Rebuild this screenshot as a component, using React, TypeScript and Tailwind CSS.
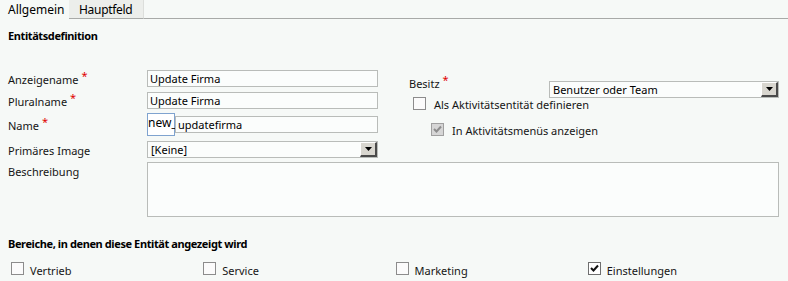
import React from "react"

function Req() {
  return <span className="ml-[3px] relative -top-[4px] text-[#e00000]">*</span>
}

function Box({ checked = false, disabled = false }: { checked?: boolean; disabled?: boolean }) {
  return (
    <span
      className={
        "inline-flex items-center justify-center w-[13px] h-[13px] border shrink-0 " +
        (disabled ? "border-[#a0a0a0] bg-[#d6d6d6]" : checked ? "border-[#6f6f6f] bg-white" : "border-[#8c8c8c] bg-[#fbfbfb]")
      }
    >
      {checked && (
        <svg width="9" height="9" viewBox="0 0 9 9">
          <path d="M1 4 L3.5 6.5 L8 1.5" fill="none" stroke={disabled ? "#8d8d8d" : "#111"} strokeWidth="2" />
        </svg>
      )}
    </span>
  )
}

function Select({ value, className }: { value: string; className: string }) {
  return (
    <div className={"flex h-[17px] border border-[#b9bcb9] bg-[#fbfdfc] " + className}>
      <span className="flex-1 pl-[3px] leading-[15px] text-black">{value}</span>
      <span className="w-[17px] h-[15px] bg-[#d8d6cf] border-t border-l border-t-white border-l-white border-r-2 border-b-2 border-r-[#4a4a4a] border-b-[#4a4a4a] flex items-center justify-center">
        <svg width="7" height="4" viewBox="0 0 7 4">
          <path d="M0 0 H7 L3.5 4 Z" fill="#000" />
        </svg>
      </span>
    </div>
  )
}

function Input({ value, className = "" }: { value: string; className?: string }) {
  return (
    <div className={"h-[17px] border border-[#b9bcb9] bg-[#fbfdfc] pl-[2px] leading-[15px] text-black " + className}>
      {value}
    </div>
  )
}

function Row({
  label,
  req,
  children,
  h,
  pt = "pt-[1px]",
}: {
  label: string
  req?: boolean
  children: React.ReactNode
  h: string
  pt?: string
}) {
  return (
    <div className={"flex items-start " + h}>
      <div className={"w-[139px] leading-[17px] " + pt}>
        {label}
        {req && <Req />}
      </div>
      <div className="flex-1">{children}</div>
    </div>
  )
}

export default function App() {
  const areas = [
    { label: "Vertrieb", checked: false },
    { label: "Service", checked: false },
    { label: "Marketing", checked: false },
    { label: "Einstellungen", checked: true },
  ]
  return (
    <div className="w-[788px] h-[281px] overflow-hidden bg-[#f6f9f7] text-[11px] text-[#151515] font-['Noto_Sans',sans-serif]">
      <div className="flex h-[19px] text-[12px] text-black">
        <div className="w-[69px] pl-[8px] leading-[19px]">Allgemein</div>
        <div className="w-[75px] pl-[10px] leading-[19px] tracking-[-0.3px] bg-[#eceeeb] border-b border-r border-[#a8aaa8] border-r-[#dcdedb]">
          Hauptfeld
        </div>
        <div className="flex-1 border-b border-[#a8aaa8]" />
      </div>

      <div className="pl-[8px] pr-[9px]">
        <div className="mt-[9px] font-bold tracking-[-0.4px] leading-[16px] text-black">Entitätsdefinition</div>

        <div className="mt-[26px] flex">
          <div className="w-[370px]">
            <Row label="Anzeigename" req h="h-[22px]">
              <Input value="Update Firma" />
            </Row>
            <Row label="Pluralname" req h="h-[21px]">
              <Input value="Update Firma" />
            </Row>
            <Row label="Name" req h="h-[28px]" pt="pt-[4px]">
              <div className="flex">
                <div className="h-[23px] w-[28px] border border-[#7fa3cf] bg-white leading-[17px] text-[12px] text-black">new_</div>
                <Input value="updatefirma" className="flex-1 mt-[3px]" />
              </div>
            </Row>
            <Row label="Primäres Image" h="h-[21px]">
              <Select value="[Keine]" className="" />
            </Row>
          </div>
          <div className="flex-1 pl-[31px]">
            <div className="flex h-[27px]">
              <div className="mt-[5px] leading-[17px]">
                Besitz
                <Req />
              </div>
              <Select value="Benutzer oder Team" className="ml-auto mt-[11px] w-[230px]" />
            </div>
            <div className="flex items-center pl-[4px] h-[13px]">
              <Box />
              <span className="ml-[8px] mt-[2px] leading-[17px]">Als Aktivitätsentität definieren</span>
            </div>
            <div className="mt-[13px] flex items-center pl-[22px] h-[13px]">
              <Box checked disabled />
              <span className="ml-[8px] mt-[2px] leading-[17px]">In Aktivitätsmenüs anzeigen</span>
            </div>
          </div>
        </div>

        <div className="flex">
          <div className="w-[139px] mt-[1px] leading-[17px]">Beschreibung</div>
          <div className="flex-1 h-[55px] border border-[#b9bcb9] bg-[#fbfdfc]" />
        </div>

        <div className="mt-[19px] font-bold tracking-[-0.4px] leading-[16px] text-black">
          Bereiche, in denen diese Entität angezeigt wird
        </div>

        <div className="mt-[10px] grid grid-cols-4 w-[772px] pl-[3px]">
          {areas.map((a) => (
            <div key={a.label} className="flex items-center h-[13px]">
              <Box checked={a.checked} />
              <span className="ml-[6px] mt-[4px] leading-[17px]">{a.label}</span>
            </div>
          ))}
        </div>
      </div>
    </div>
  )
}
